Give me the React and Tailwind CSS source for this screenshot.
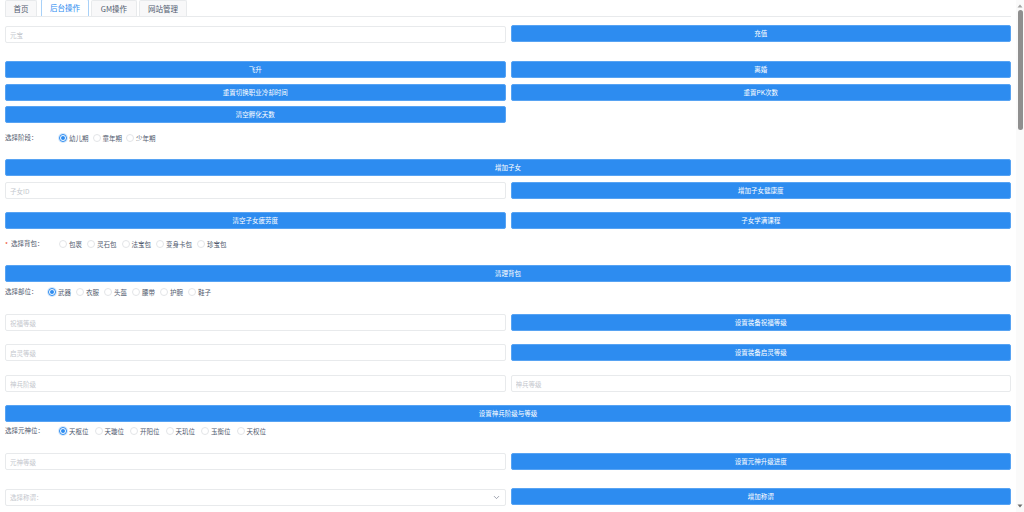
import React from "react";
import { ChevronDown } from "lucide-react";

const tabs = [
  { name: "首页", className: "w-[32px]" },
  { name: "后台操作", className: "w-[48px] ml-[2px]", active: true },
  { name: "GM操作", className: "w-[46px]" },
  { name: "网站管理", className: "w-[48px]" },
];

function Btn({ children }) {
  return (
    <button className="block w-full h-[17px] rounded-[2px] border border-[#57a3f3] bg-[#2d8cf0] text-[6.5px] leading-[15px] text-white">
      {children}
    </button>
  );
}

function Field({ placeholder }) {
  return (
    <input
      placeholder={placeholder}
      className="block w-full h-[17px] rounded-[2px] border border-[#e8eaec] bg-white px-[4px] text-[6.5px] outline-none placeholder:text-[#c5c8ce]"
    />
  );
}

function RadioGroup({ items, gap, checked }) {
  return (
    <div className={`flex items-center ${gap}`}>
      {items.map((item) => (
        <span key={item} className="flex items-center gap-[2px] text-[6.5px] leading-[10px] text-[#515a6e]">
          {item === checked ? (
            <span className="flex items-center justify-center w-[8px] h-[8px] rounded-full border border-[#2d8cf0] bg-white shadow-[0_0_0_1px_rgba(45,140,240,0.2)]">
              <span className="w-[4px] h-[4px] rounded-full bg-[#2d8cf0]" />
            </span>
          ) : (
            <span className="w-[8px] h-[8px] rounded-full border border-[#e3e5e8] bg-white" />
          )}
          {item}
        </span>
      ))}
    </div>
  );
}

export default function App() {
  return (
    <div
      className="flex h-[512px] w-[1024px] overflow-hidden bg-white"
      style={{ fontFamily: '"Noto Sans CJK SC", "Liberation Sans", sans-serif' }}
    >
      <div className="w-[1016px] px-[5px]">
        {/* Tabs */}
        <div className="flex h-[17px] items-end gap-[2px] border-b border-[#e8eaec]">
          {tabs.map((tab) => (
            <div
              key={tab.name}
              className={
                tab.active
                  ? `${tab.className} h-[17px] rounded-t-[2px] border border-b-0 border-[#a8d1f8] bg-white text-center text-[7.5px] leading-[16px] text-[#2d8cf0]`
                  : `${tab.className} h-[16px] rounded-t-[2px] border border-b-0 border-[#e8eaec] bg-[#f8f8f9] text-center text-[7.5px] leading-[16px] text-[#515a6e]`
              }
            >
              {tab.name}
            </div>
          ))}
        </div>

        <div className="mt-[8px] grid grid-cols-2 gap-x-[5px]">
          <div className="pt-[1px]">
            <Field placeholder="元宝" />
          </div>
          <Btn>充值</Btn>
        </div>

        <div className="mt-[18px] grid grid-cols-2 gap-x-[5px] gap-y-[5.5px]">
          <Btn>飞升</Btn>
          <Btn>离婚</Btn>
          <Btn>重置切换职业冷却时间</Btn>
          <Btn>重置PK次数</Btn>
          <Btn>清空孵化天数</Btn>
        </div>

        <div className="mt-[10px] flex h-[10px] items-center text-[6.5px] text-[#515a6e]">
          <span className="w-[54px]">选择阶段：</span>
          <RadioGroup items={["幼儿期", "童年期", "少年期"]} gap="gap-[4px]" checked="幼儿期" />
        </div>

        <div className="mt-[16px]">
          <Btn>增加子女</Btn>
        </div>

        <div className="mt-[6px] grid grid-cols-2 gap-x-[5px]">
          <Field placeholder="子女ID" />
          <Btn>增加子女健康度</Btn>
        </div>

        <div className="mt-[13px] grid grid-cols-2 gap-x-[5px]">
          <Btn>清空子女疲劳度</Btn>
          <Btn>子女学满课程</Btn>
        </div>

        <div className="mt-[10px] flex h-[10px] items-center text-[6.5px] text-[#515a6e]">
          <span className="w-[6px] translate-y-[1px] text-[#ed4014]">*</span>
          <span className="w-[48px]">选择背包：</span>
          <RadioGroup items={["包裹", "灵石包", "法宝包", "变身卡包", "珍宝包"]} gap="gap-[5px]" />
        </div>

        <div className="mt-[16px]">
          <Btn>清理背包</Btn>
        </div>

        <div className="mt-[5px] flex h-[10px] items-center text-[6.5px] text-[#515a6e]">
          <span className="w-[43px]">选择部位：</span>
          <RadioGroup items={["武器", "衣服", "头盔", "腰带", "护腕", "鞋子"]} gap="gap-[5px]" checked="武器" />
        </div>

        <div className="mt-[17px] grid grid-cols-2 gap-x-[5px]">
          <Field placeholder="祝福等级" />
          <Btn>设置装备祝福等级</Btn>
        </div>

        <div className="mt-[13px] grid grid-cols-2 gap-x-[5px]">
          <Field placeholder="启灵等级" />
          <Btn>设置装备启灵等级</Btn>
        </div>

        <div className="mt-[14px] grid grid-cols-2 gap-x-[5px]">
          <Field placeholder="神兵阶级" />
          <Field placeholder="神兵等级" />
        </div>

        <div className="mt-[13px]">
          <Btn>设置神兵阶级与等级</Btn>
        </div>

        <div className="mt-[4px] flex h-[10px] items-center text-[6.5px] text-[#515a6e]">
          <span className="w-[54px]">选择元神位：</span>
          <RadioGroup items={["天枢位", "天璇位", "开阳位", "天玑位", "玉衡位", "天权位"]} gap="gap-[6px]" checked="天枢位" />
        </div>

        <div className="mt-[17px] grid grid-cols-2 gap-x-[5px]">
          <Field placeholder="元神等级" />
          <Btn>设置元神升级进度</Btn>
        </div>

        <div className="mt-[18px] grid grid-cols-2 gap-x-[5px]">
          <div className="mt-[1px] flex h-[17px] items-center justify-between rounded-[2px] border border-[#e8eaec] px-[4px] text-[6.5px] text-[#c5c8ce]">
            选择称谓：
            <ChevronDown size={9} className="text-[#808695]" />
          </div>
          <Btn>增加称谓</Btn>
        </div>
      </div>

      {/* Scrollbar */}
      <div className="flex w-[8px] flex-col items-center bg-[#fafafa] py-[4px]">
        <svg width="6" height="4" viewBox="0 0 6 4" className="shrink-0">
          <path d="M3 0.5 L5.5 3.5 L0.5 3.5 Z" fill="#a3a3a3" />
        </svg>
        <div className="mt-[2px] h-[120px] w-[5px] rounded-full bg-[#8f8f8f]" />
        <svg width="6" height="4" viewBox="0 0 6 4" className="mt-auto shrink-0">
          <path d="M0.5 0.5 L5.5 0.5 L3 3.5 Z" fill="#6e6e6e" />
        </svg>
      </div>
    </div>
  );
}
